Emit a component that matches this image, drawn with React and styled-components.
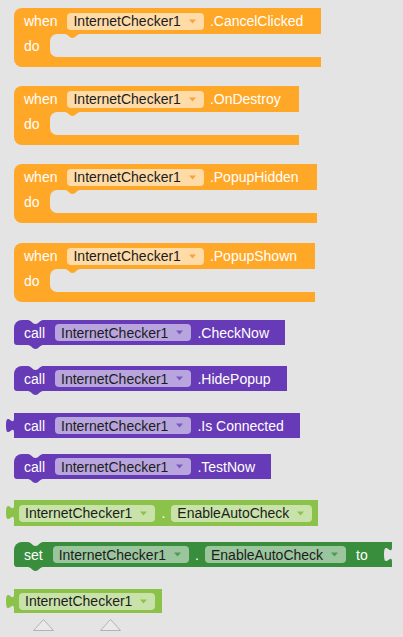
import React from "react";
import styled, { createGlobalStyle } from "styled-components";

const colors = {
  page: "#e4e4e4",
  white: "#ffffff",
  fieldText: "#1c1c1c",
  event: "#ffa726",
  eventField: "#ffdba8",
  eventArrow: "#f3a640",
  method: "#673ab7",
  methodField: "#b8a5dd",
  methodArrow: "#7c57c2",
  getter: "#8bc34a",
  getterField: "#c9e2aa",
  getterArrow: "#8bc34a",
  setter: "#388e3c",
  setterField: "#9bc69d",
  setterArrow: "#4f9a52",
};

const GlobalStyle = createGlobalStyle`
  html, body {
    margin: 0;
    background: ${colors.page};
  }
  body {
    font-family: "Liberation Sans", Arial, sans-serif;
    overflow: hidden;
  }
`;

const Workspace = styled.div`
  display: flex;
  flex-direction: column;
  align-items: flex-start;
  box-sizing: border-box;
  height: 637px;
  overflow: hidden;
  padding: 8px 0 0 14px;
`;

const Label = styled.span`
  color: ${colors.white};
  font-size: 14px;
  margin-right: ${(p) => p.$space || 4}px;
  margin-left: ${(p) => p.$lead || 0}px;
  white-space: nowrap;
`;

const FieldBox = styled.span`
  display: inline-flex;
  align-items: center;
  gap: 8px;
  height: 17px;
  padding: 0 8px 0 6px;
  border-radius: 4px;
  background: ${(p) => p.$bg};
  color: ${colors.fieldText};
  font-size: 14px;
  white-space: nowrap;
`;

const Dot = styled.span`
  color: ${colors.white};
  font-size: 14px;
`;

/* ---- event blocks ---- */

const EventShell = styled.div`
  display: flex;
  flex-direction: column;
  margin-top: ${(p) => p.$top}px;
`;

const EventHead = styled.div`
  display: flex;
  align-items: center;
  gap: 6px;
  height: 26px;
  padding: 0 14px 0 10px;
  background: ${colors.event};
  border-top-left-radius: 8px;
`;

const EventBody = styled.div`
  display: flex;
  height: 23px;
  background: linear-gradient(90deg, ${colors.event} 44px, transparent 44px);
`;

const DoArm = styled.div`
  display: flex;
  align-items: center;
  box-sizing: border-box;
  width: 36px;
  padding-left: 10px;
`;

const Slot = styled.div`
  position: relative;
  flex: 1;
  background: ${colors.page};
  border-radius: 7px 0 0 7px;
`;

const EventFoot = styled.div`
  height: 10px;
  background: ${colors.event};
  border-bottom-left-radius: 8px;
`;

/* ---- statement / value blocks ---- */

const Block = styled.div`
  position: relative;
  display: flex;
  align-items: center;
  gap: 6px;
  height: ${(p) => p.$h || 25}px;
  margin-top: ${(p) => p.$top}px;
  padding: 0 ${(p) => p.$pr}px 0 ${(p) => p.$pl}px;
  background: ${(p) => p.$bg};
  border-radius: ${(p) => (p.$statement ? "8px 0 0 3px" : "0")};
`;

const NotchSvg = styled.svg`
  position: absolute;
  left: ${(p) => p.$left}px;
  top: ${(p) => (p.$below ? "100%" : "0")};
  overflow: visible;
`;

const TabSvg = styled.svg`
  position: absolute;
  top: 5px;
  ${(p) => (p.$right ? "right: -1px;" : "left: -8px;")}
  overflow: visible;
`;

const Triangles = styled.div`
  display: flex;
  gap: 46px;
  margin-top: 6px;
  padding-left: 19px;
`;

const Notch = ({ color, left = 14, below }) => (
  <NotchSvg $left={left} $below={below} width="15" height="4" viewBox="0 0 15 4">
    <path d="M0,0 C3,0 4.5,4 7.5,4 C10.5,4 12,0 15,0 Z" fill={color} />
  </NotchSvg>
);

const Tab = ({ color, right }) => (
  <TabSvg $right={right} width="9" height="15" viewBox="0 0 9 15">
    <path d="M9,0 H8 C8,10 0,-8 0,7.5 C0,23 8,5 8,15 H9 Z" fill={color} />
  </TabSvg>
);

const Field = ({ bg, arrow, children }) => (
  <FieldBox $bg={bg}>
    {children}
    <svg width="7" height="5" viewBox="0 0 7 5">
      <path d="M0,0.5 H7 L3.5,4.5 Z" fill={arrow} />
    </svg>
  </FieldBox>
);

const EventBlock = ({ top, method }) => (
  <EventShell $top={top}>
    <EventHead>
      <Label>when</Label>
      <Field bg={colors.eventField} arrow={colors.eventArrow}>
        InternetChecker1
      </Field>
      <Label $space={0}>{method}</Label>
    </EventHead>
    <EventBody>
      <DoArm>
        <Label>do</Label>
      </DoArm>
      <Slot>
        <Notch color={colors.event} left={15} />
      </Slot>
    </EventBody>
    <EventFoot />
  </EventShell>
);

const CallBlock = ({ top, method, value }) => (
  <Block $top={top} $bg={colors.method} $pl={10} $pr={12} $statement={!value}>
    {value ? (
      <Tab color={colors.method} />
    ) : (
      <>
        <Notch color={colors.page} />
        <Notch color={colors.method} below />
      </>
    )}
    <Label>call</Label>
    <Field bg={colors.methodField} arrow={colors.methodArrow}>
      InternetChecker1
    </Field>
    <Label $space={0}>{method}</Label>
  </Block>
);

const GetterBlock = ({ top, h, property }) => (
  <Block $top={top} $h={h} $bg={colors.getter} $pl={5} $pr={property ? 6 : 7}>
    <Tab color={colors.getter} />
    <Field bg={colors.getterField} arrow={colors.getterArrow}>
      InternetChecker1
    </Field>
    {property && (
      <>
        <Dot>.</Dot>
        <Field bg={colors.getterField} arrow={colors.getterArrow}>
          {property}
        </Field>
      </>
    )}
  </Block>
);

const SetterBlock = ({ top, property }) => (
  <Block $top={top} $bg={colors.setter} $pl={10} $pr={20} $statement>
    <Notch color={colors.page} />
    <Notch color={colors.setter} below />
    <Label>set</Label>
    <Field bg={colors.setterField} arrow={colors.setterArrow}>
      InternetChecker1
    </Field>
    <Dot>.</Dot>
    <Field bg={colors.setterField} arrow={colors.setterArrow}>
      {property}
    </Field>
    <Label $lead={4} $space={0}>
      to
    </Label>
    <Tab color={colors.page} right />
  </Block>
);

const ScrollMark = () => (
  <svg width="21" height="12" viewBox="0 0 21 12">
    <polygon points="0.5,11.5 10.5,0.5 20.5,11.5" fill="#e9e9e9" stroke="#b3b3b3" />
  </svg>
);

const App = () => (
  <>
    <GlobalStyle />
    <Workspace>
      <EventBlock top={0} method=".CancelClicked" />
      <EventBlock top={19} method=".OnDestroy" />
      <EventBlock top={19} method=".PopupHidden" />
      <EventBlock top={20} method=".PopupShown" />
      <CallBlock top={18} method=".CheckNow" />
      <CallBlock top={21} method=".HidePopup" />
      <CallBlock top={22} method=".Is Connected" value />
      <CallBlock top={16} method=".TestNow" />
      <GetterBlock top={21} h={26} property="EnableAutoCheck" />
      <SetterBlock top={16} property="EnableAutoCheck" />
      <GetterBlock top={22} h={24} />
      <Triangles>
        <ScrollMark />
        <ScrollMark />
      </Triangles>
    </Workspace>
  </>
);

export default App;
